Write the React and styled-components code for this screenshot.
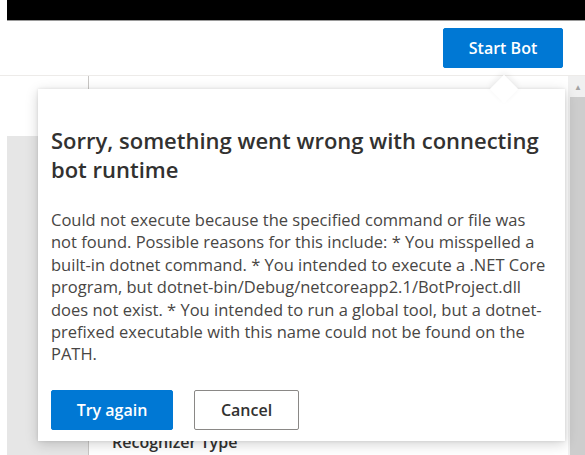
import React from 'react'
import styled, { createGlobalStyle } from 'styled-components'

const GlobalStyle = createGlobalStyle`
    html, body {
        margin: 0;
        padding: 0;
        background: #ffffff;
        font-family: "Segoe UI", "Open Sans", "Noto Sans", sans-serif;
        overflow: hidden;
    }
`

const Page = styled.div`
    position: relative;
    width: 585px;
    height: 455px;
    overflow: hidden;
    display: flex;
    flex-direction: column;
`

const TitleBar = styled.div`
    height: 20px;
    margin-left: 7px;
    background: #000000;
    border-bottom: 1px solid #9a9a9a;
`

const Toolbar = styled.div`
    height: 54px;
    display: flex;
    align-items: center;
    justify-content: flex-end;
    padding-right: 22px;
    border-bottom: 1px solid #edebe9;
`

const Button = styled.button`
    height: 40px;
    width: ${p => p.$width}px;
    border-radius: 2px;
    font-family: inherit;
    font-size: 16px;
    font-weight: 600;
    cursor: pointer;
    background: ${p => (p.$primary ? '#0078d4' : '#ffffff')};
    color: ${p => (p.$primary ? '#ffffff' : '#323130')};
    border: 1px solid ${p => (p.$primary ? '#0078d4' : '#8a8886')};
    padding: 0;
`

const Body = styled.div`
    flex: 1;
    display: flex;
    margin-left: 7px;
`

const Nav = styled.div`
    width: 81px;
    display: flex;
    flex-direction: column;
    border-right: 1px solid #c8c6c4;
`

const NavHead = styled.div`
    height: 60px;
    background: #ffffff;
`

const NavList = styled.div`
    flex: 1;
    background: #e6e6e6;
`

const Content = styled.div`
    flex: 1;
    display: flex;
    flex-direction: column;
    justify-content: flex-end;
    padding: 0 0 3px 23px;
`

const FieldLabel = styled.div`
    font-size: 16px;
    font-weight: 600;
    color: #323130;
    line-height: 20px;
`

const Scrollbar = styled.div`
    width: 17px;
    display: flex;
    flex-direction: column;
    background: #f0f0f0;
`

const ScrollArrow = styled.div`
    height: 21px;
    display: flex;
    align-items: center;
    justify-content: center;
    color: #a3a3a3;
    font-size: 8px;
    padding-left: 3px;
`

const ScrollThumb = styled.div`
    flex: 1;
    margin-left: 2px;
    background: #cdcdcd;
`

const Callout = styled.div`
    position: absolute;
    left: 38px;
    top: 89px;
    width: 527px;
    height: 352px;
    box-sizing: border-box;
    padding: 37px 13px 0 13px;
    background: #ffffff;
    box-shadow: 0 3px 12px rgba(0, 0, 0, 0.18), 0 0 3px rgba(0, 0, 0, 0.1);
    z-index: 2;
`

const Beak = styled.div`
    position: absolute;
    top: -10px;
    left: 456px;
    width: 20px;
    height: 20px;
    background: #ffffff;
    transform: rotate(45deg);
    box-shadow: -2px -2px 6px rgba(0, 0, 0, 0.08);
`

const CalloutInner = styled.div`
    position: relative;
    background: #ffffff;
`

const Title = styled.h2`
    margin: 0;
    font-size: 22px;
    font-weight: 600;
    line-height: 29px;
    color: #323130;
`

const Message = styled.p`
    margin: 25px 0 0 0;
    font-size: 16.5px;
    line-height: 22.4px;
    color: #484644;
`

const Actions = styled.div`
    display: flex;
    gap: 21px;
    margin-top: 24px;
`

const message =
    'Could not execute because the specified command or file was not found. Possible reasons for this include: * You misspelled a built-in dotnet command. * You intended to execute a .NET Core program, but dotnet-bin/Debug/netcoreapp2.1/BotProject.dll does not exist. * You intended to run a global tool, but a dotnet-prefixed executable with this name could not be found on the PATH.'

export default function App() {
    return (
        <Page>
            <GlobalStyle />
            <TitleBar />
            <Toolbar>
                <Button $primary $width={120}>Start Bot</Button>
            </Toolbar>
            <Body>
                <Nav>
                    <NavHead />
                    <NavList />
                </Nav>
                <Content>
                    <FieldLabel>Recognizer Type</FieldLabel>
                </Content>
                <Scrollbar>
                    <ScrollArrow>▲</ScrollArrow>
                    <ScrollThumb />
                </Scrollbar>
            </Body>
            <Callout>
                <Beak />
                <CalloutInner>
                    <Title>Sorry, something went wrong with connecting bot runtime</Title>
                    <Message>{message}</Message>
                    <Actions>
                        <Button $primary $width={122}>Try again</Button>
                        <Button $width={105}>Cancel</Button>
                    </Actions>
                </CalloutInner>
            </Callout>
        </Page>
    )
}
